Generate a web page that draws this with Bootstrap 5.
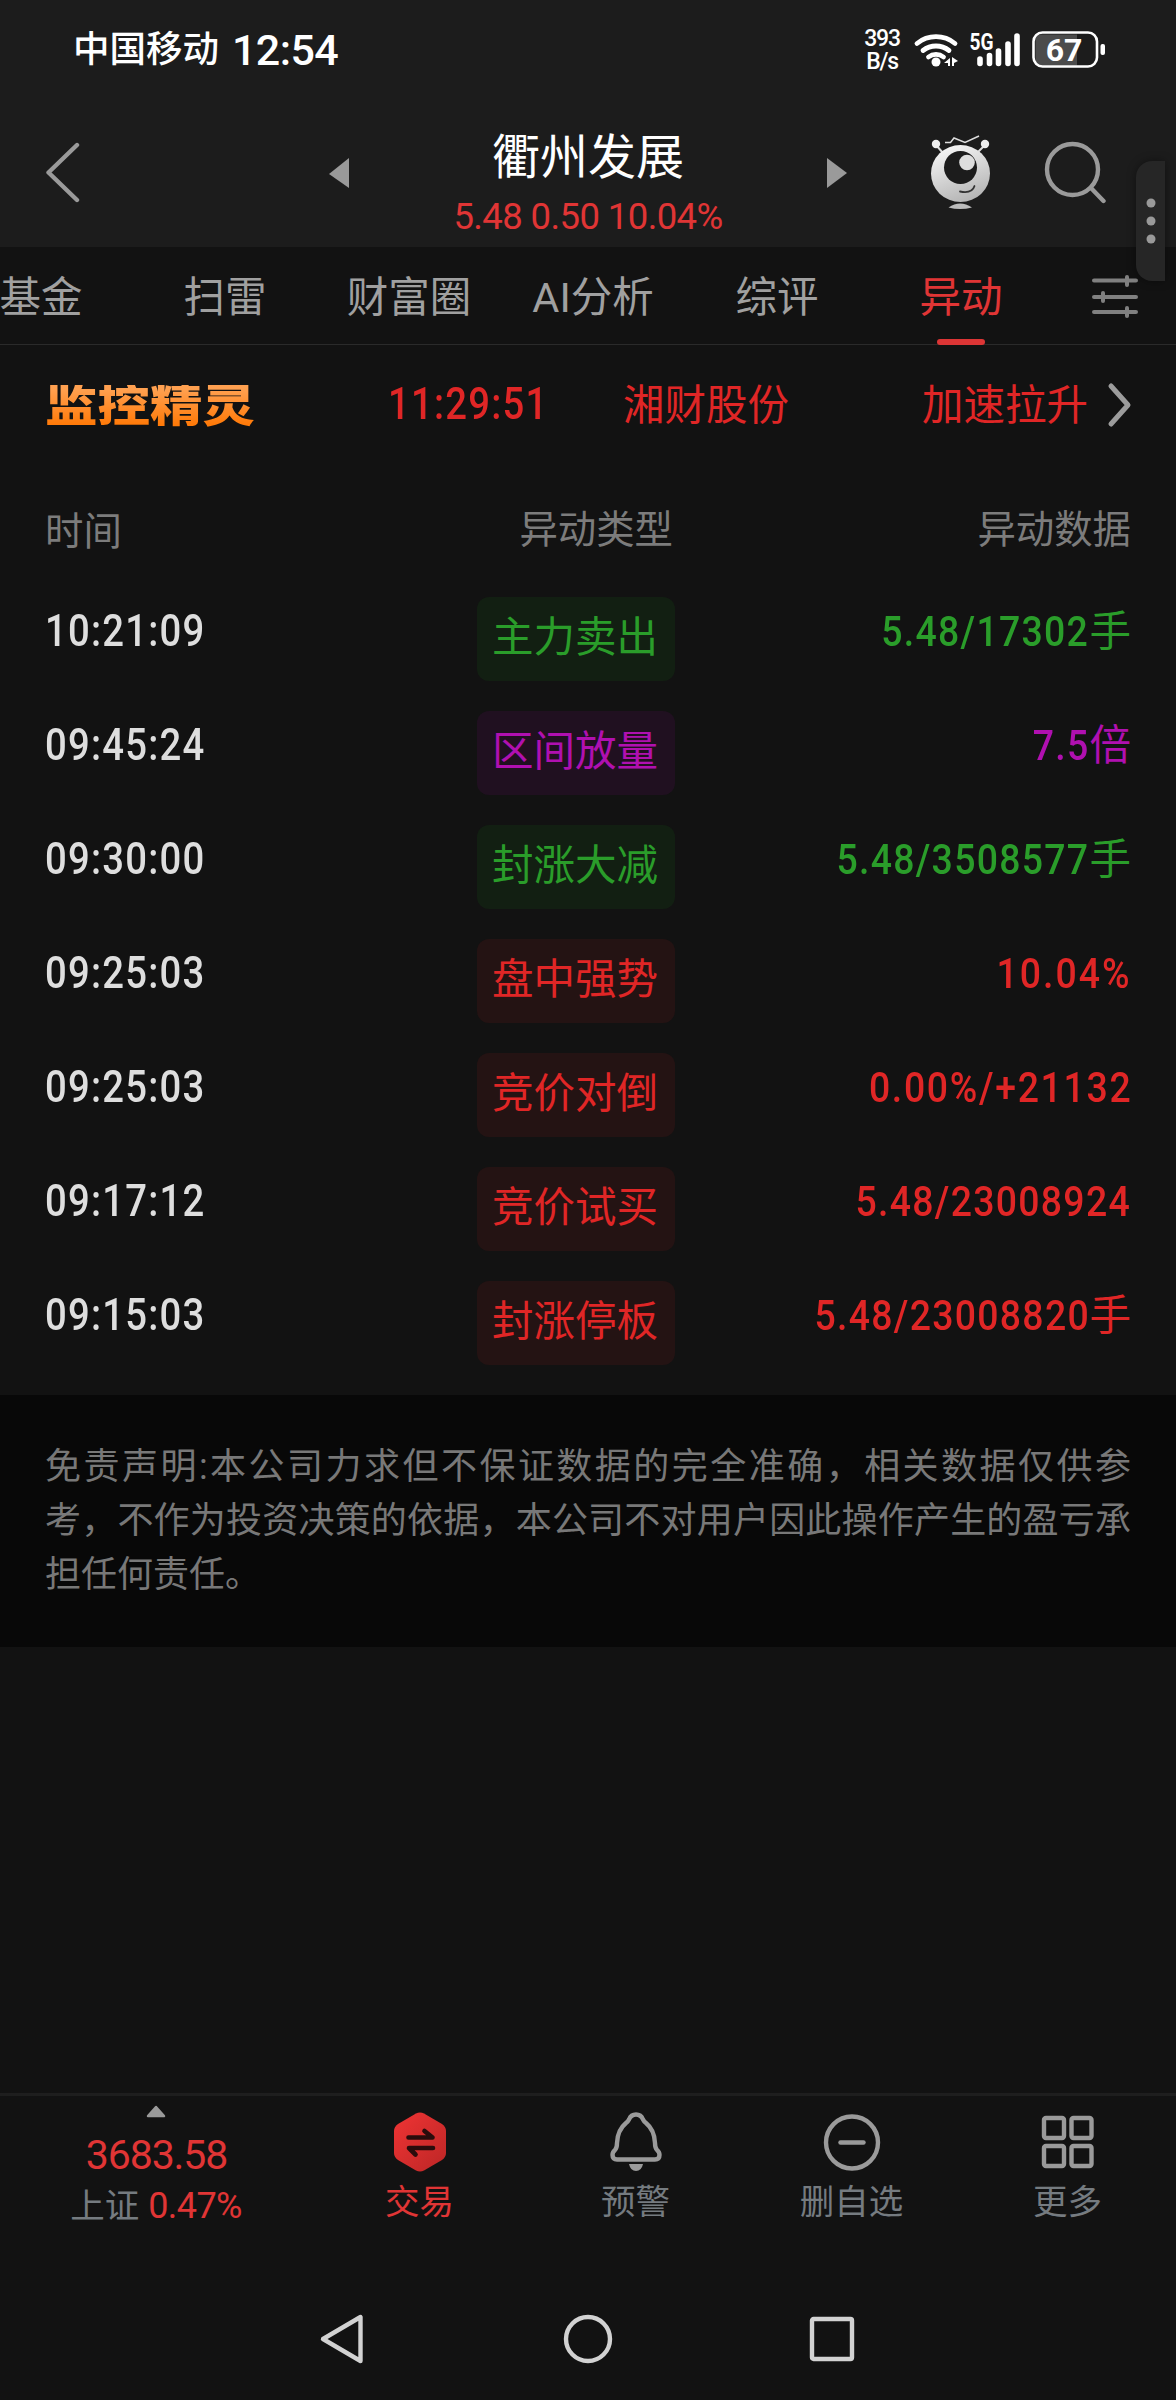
<!DOCTYPE html>
<html lang="zh-CN">
<head>
<meta charset="utf-8">
<meta name="viewport" content="width=device-width, initial-scale=1">
<title>衢州发展 异动</title>
<link href="https://cdn.jsdelivr.net/npm/bootstrap@5.3.0/dist/css/bootstrap.min.css" rel="stylesheet">
<style>
html,body{background:#121212}
body{font-family:Roboto,"Noto Sans CJK SC",sans-serif;color:#dedede;width:1176px;height:2400px;overflow:hidden;line-height:1}
svg{display:block;flex:none}
.c-red{color:#e02626}.c-soft{color:#e03535}.c-green{color:#2a9d2a}.c-purple{color:#b010b0}
.top-zone{background:#1c1c1c;height:247px}
.statusbar{height:100px;padding:0 69px 0 73px}
.carrier{font-size:36.5px;font-weight:500;line-height:48px;white-space:nowrap}
.clock{font-size:43px;font-weight:500;letter-spacing:-.6px;margin-left:13px;line-height:48px}
.rate{font-size:23px;font-weight:500;letter-spacing:-1.2px;line-height:23px;width:38px}
.rate div{height:23px}
.titlebar{height:147px;padding:0 68px 0 46px}
.title-mid{width:476px;margin-top:30px}
.stock{font-size:48px;line-height:56px}
.quote{font-size:36.5px;line-height:40px;letter-spacing:-.6px;margin-top:11px}
.tabs-strip{height:98px;border-bottom:1px solid #2a2a2a;color:#a0a0a0;font-size:41.5px}
.tabs-strip .tab-cell{flex:0 0 184px;height:97px;line-height:101px;text-align:center;white-space:nowrap}
.tabs-strip .tab-cell:first-child{margin-left:-51px}
.tab-cell.on::after{content:"";position:absolute;left:68px;bottom:-1px;width:48px;height:6px;border-radius:3px;background:#dc3535}
.monitor{height:120px;padding:0 42px 0 45px;font-size:41.5px;line-height:63px}
.brandword{font-size:52.5px;font-weight:900;line-height:52px;margin-top:3px;transform:scaleY(.86);background:linear-gradient(#ffa050 10%,#ff7a08 90%);-webkit-background-clip:text;background-clip:text;color:transparent}
.din{font-size:43.5px;letter-spacing:1.4px;font-weight:500;line-height:70px;transform:scaleX(.88);transform-origin:0 50%;white-space:nowrap}
.heads{height:126px;padding:0 45px;font-size:38.4px;color:#7c7c7c}
.line-item{height:114px;padding:0 45px}
.col-a{flex:0 0 361px}.col-b{flex:0 0 269px}.col-c{flex:1 1 0}
.pill{width:198px;height:84px;border-radius:12px;font-size:41.5px;line-height:81px;text-align:center;text-indent:-2px;white-space:nowrap}
.pill.c-red{background:#241313}.pill.c-green{background:#121f12}.pill.c-purple{background:#201020}
.val{line-height:70px}
.val .num{font-size:42.5px;letter-spacing:1.45px;font-weight:500;transform:scaleX(.88);transform-origin:100% 50%;white-space:nowrap}
.val .pct{letter-spacing:2.3px;margin-right:-1px}
.val .cj{font-size:41.5px}
.notice{background:#080808;height:252px;padding:45px 45px 0;font-size:36px;line-height:54px;text-align:justify;color:#787878}
.dock{border-top:3px solid #1e1e1e;height:187px;color:#757b80;font-size:34.5px}
.dock .idx{flex:0 0 312px}
.idx-val{font-size:41px;letter-spacing:-1.1px;line-height:48px;margin:13px 0 0 1px}
.idx-sub{line-height:40px;gap:9px;margin-top:7px}
.idx-sub span{font-size:36px;letter-spacing:-.6px}
.dock .act{flex:0 0 216px;padding-top:12px}
.dock .act span{line-height:40px;margin:8px 1px 0 0}
.sysnav{height:118px;margin-bottom:2px;gap:193px}
.handle{position:absolute;left:1136px;top:161px;width:29px;height:120px;border-radius:16px 0 0 16px;background:#262626;box-shadow:0 0 10px #0006}
</style>
<script src="https://cdn.jsdelivr.net/npm/bootstrap@5.3.0/dist/js/bootstrap.bundle.min.js"></script>
</head>
<body class="position-relative d-flex flex-column">
<header class="top-zone text-white">
  <div class="statusbar d-flex align-items-center">
    <span class="carrier">中国移动</span><span class="clock">12:54</span>
    <div class="rate ms-auto text-center"><div>393</div><div>B/s</div></div>
    <svg class="ms-2" width="198" height="48" viewBox="909 26 198 48" fill="none" stroke="#fff" stroke-linecap="round">
      <path d="M917 43.500a30 30 0 0 1 38 0" stroke-width="4.800"/><path d="M923 50.500a21 21 0 0 1 26 0" stroke-width="4.800"/><path d="M928.500 57a12 12 0 0 1 15 0" stroke-width="4.800"/>
      <circle cx="936" cy="62" r="4.500" fill="#fff" stroke="none"/>
      <path d="M944 63l6-5v8h-2v-3zM958 61l-6-4v9h2v-3z" fill="#fff" stroke="none"/>
      <path d="M980 59v4.500M989.500 55.500v8M998.500 51v12.500M1008 44v19.500M1017 36v27.500" stroke-width="5.600"/>
      <text x="969.500" y="49.500" font-size="23" font-weight="700" fill="#fff" stroke="none" textLength="24" lengthAdjust="spacingAndGlyphs">5G</text>
      <path d="M1041 34.500h36v31h-36q-5.500 0-5.500-6v-19q0-6 5.500-6z" fill="#4c4c4c" stroke="none"/>
      <rect x="1033.500" y="32.500" width="63.500" height="34" rx="9" stroke-width="2.600"/>
      <rect x="1100.500" y="44" width="4.500" height="11" rx="2" fill="#fff" stroke="none"/>
      <text x="1064" y="61" font-size="32" font-weight="700" fill="#fff" stroke="none" text-anchor="middle">67</text>
    </svg>
  </div>
  <div class="titlebar d-flex align-items-start">
    <svg width="34" height="62" viewBox="46 142 34 62" style="margin-top:42px"><path d="M77 145L48.500 172.500l28.500 27.500" fill="none" stroke="#9a9a9a" stroke-width="4.400" stroke-linecap="round" stroke-linejoin="round"/></svg>
    <svg width="22" height="32" viewBox="0 0 22 32" style="margin:57px 0 0 248px"><path d="M21 1v30L1 17z" fill="#9a9a9a"/></svg>
    <div class="title-mid text-center"><div class="stock">衢州发展</div><div class="quote c-soft">5.48 0.50 10.04%</div></div>
    <svg width="22" height="32" viewBox="0 0 22 32" style="margin-top:57px"><path d="M1 1v30l20-15z" fill="#9a9a9a"/></svg>
    <svg width="64" height="78" viewBox="928 132 64 78" style="margin:32px 0 0 80px">
      <defs><linearGradient id="bot" x1=".2" y1="0" x2=".6" y2="1"><stop stop-color="#f8f8f8"/><stop offset="1" stop-color="#b4b4b4"/></linearGradient></defs>
      <path d="M936 145l7 8M985 145l-8 8" stroke="#ddd" stroke-width="2"/><circle cx="936" cy="144" r="4.200" fill="#eee"/><circle cx="985" cy="144" r="4.200" fill="#eee"/>
      <path d="M945 142.500h5.500l3.500-4.500 11 4.500 14-6.500" fill="none" stroke="#ddd" stroke-width="1.500"/>
      <ellipse cx="960.500" cy="173.500" rx="29.500" ry="28.500" fill="url(#bot)"/><circle cx="960.500" cy="167.500" r="16.500" fill="#1c1c1c"/><circle cx="967" cy="162.500" r="7.800" fill="#ddd"/>
      <path d="M960 191.500q12 2.500 14.500-5.500" fill="none" stroke="#333" stroke-width="1.800" stroke-linecap="round"/><path d="M948.500 207.500q11.500-8 23.500 0q-12 3-23.500 0z" fill="#bbb"/>
    </svg>
    <svg width="64" height="64" viewBox="1043 140 64 64" style="margin:40px 0 0 51px"><g fill="none" stroke="#9a9a9a" stroke-width="4.400" stroke-linecap="round"><circle cx="1072.500" cy="169.500" r="25.500"/><path d="M1091 188l12.500 13"/></g></svg>
  </div>
</header>
<nav class="tabs-strip d-flex">
  <div class="tab-cell">基金</div><div class="tab-cell">扫雷</div><div class="tab-cell">财富圈</div><div class="tab-cell">AI分析</div><div class="tab-cell">综评</div><div class="tab-cell on c-soft position-relative">异动</div>
  <svg width="48" height="44" viewBox="0 0 48 44" style="margin:27px 0 0 38px"><path d="M3 6.500h42M3 23h42M3 38h42M36 3v8M12 19v8M36 34v8" stroke="#808080" stroke-width="4" stroke-linecap="round"/></svg>
</nav>
<section class="monitor c-red d-flex align-items-center">
  <div class="brandword">监控精灵</div>
  <div class="din" style="margin-left:133px;width:237px">11:29:51</div>
  <div style="margin-left:-2px">湘财股份</div>
  <div class="ms-auto">加速拉升</div>
  <svg width="28" height="46" viewBox="0 0 28 46" style="margin-left:18px"><path d="M5 4l17 19L5 42" fill="none" stroke="#9c9c9c" stroke-width="5" stroke-linecap="round" stroke-linejoin="round"/></svg>
</section>
<section class="heads d-flex align-items-center">
  <div class="col-a pt-2">时间</div><div class="col-b text-end pt-1"><span class="me-1" style="margin-right:2px!important">异动类型</span></div><div class="col-c text-end pt-1">异动数据</div>
</section>
<main style="padding-top:6px;height:804px">
  <div class="line-item d-flex"><div class="col-a"><div class="din">10:21:09</div></div><div class="col-b d-flex justify-content-end"><div class="pill c-green">主力卖出</div></div><div class="val col-c d-flex justify-content-end c-green"><span class="num">5.48/17302</span><span class="cj">手</span></div></div>
  <div class="line-item d-flex"><div class="col-a"><div class="din">09:45:24</div></div><div class="col-b d-flex justify-content-end"><div class="pill c-purple">区间放量</div></div><div class="val col-c d-flex justify-content-end c-purple"><span class="num">7.5</span><span class="cj">倍</span></div></div>
  <div class="line-item d-flex"><div class="col-a"><div class="din">09:30:00</div></div><div class="col-b d-flex justify-content-end"><div class="pill c-green">封涨大减</div></div><div class="val col-c d-flex justify-content-end c-green"><span class="num">5.48/3508577</span><span class="cj">手</span></div></div>
  <div class="line-item d-flex"><div class="col-a"><div class="din">09:25:03</div></div><div class="col-b d-flex justify-content-end"><div class="pill c-red">盘中强势</div></div><div class="val col-c d-flex justify-content-end c-red"><span class="num pct">10.04%</span></div></div>
  <div class="line-item d-flex"><div class="col-a"><div class="din">09:25:03</div></div><div class="col-b d-flex justify-content-end"><div class="pill c-red">竞价对倒</div></div><div class="val col-c d-flex justify-content-end c-red"><span class="num pct" style="letter-spacing:1.9px">0.00%/+21132</span></div></div>
  <div class="line-item d-flex"><div class="col-a"><div class="din">09:17:12</div></div><div class="col-b d-flex justify-content-end"><div class="pill c-red">竞价试买</div></div><div class="val col-c d-flex justify-content-end c-red"><span class="num">5.48/23008924</span></div></div>
  <div class="line-item d-flex"><div class="col-a"><div class="din">09:15:03</div></div><div class="col-b d-flex justify-content-end"><div class="pill c-red">封涨停板</div></div><div class="val col-c d-flex justify-content-end c-red"><span class="num">5.48/23008820</span><span class="cj">手</span></div></div>
</main>
<div class="notice">免责声明:本公司力求但不保证数据的完全准确，相关数据仅供参考，不作为投资决策的依据，本公司不对用户因此操作产生的盈亏承担任何责任。</div>
<footer class="mt-auto">
  <div class="dock d-flex">
    <div class="idx d-flex flex-column align-items-center">
      <svg width="22" height="14" viewBox="0 0 22 14" style="margin-top:8px"><path d="M3 12L11 3l8 9z" fill="#9a9a9a" stroke="#9a9a9a" stroke-width="2.500" stroke-linejoin="round"/></svg>
      <div class="idx-val c-soft">3683.58</div>
      <div class="idx-sub d-flex">上证<span class="c-soft">0.47%</span></div>
    </div>
    <div class="act d-flex flex-column align-items-center c-soft">
      <svg width="56" height="66" viewBox="0 0 56 66"><defs><linearGradient id="hex" x1="0" y1="0" x2="1" y2="1"><stop stop-color="#f03434"/><stop offset="1" stop-color="#bc2626"/></linearGradient></defs><path d="M24 5.500q4-2 8 0l18 10.500q4 3 4 7v22q0 4-4 7L32 62.500q-4 2-8 0L6 52q-4-3-4-7V23q0-4 4-7z" fill="url(#hex)"/><path d="M16.500 29.500h24l-8-6.500M41 40H17l6.500 6.500" fill="none" stroke="#2a0c0c" stroke-width="4.600" stroke-linecap="round" stroke-linejoin="round"/></svg>
      <span>交易</span></div>
    <div class="act d-flex flex-column align-items-center">
      <svg width="56" height="66" viewBox="0 0 56 66" fill="none" stroke="#9a9a9a" stroke-width="4.400" stroke-linejoin="round"><path d="M28 6.500q5 0 7 5 1 2 3 3.500 8.500 7 9 20 0 5 2 7 2.500 2 2.500 5 0 4.500-4.500 4.500H9q-4.500 0-4.500-4.500 0-3 2.500-5 2-2 2-7 .5-13 9-20 2-1.500 3-3.500 2-5 7-5z"/><path d="M21 56h14q-1.500 7-7 7t-7-7z" fill="#9a9a9a" stroke="none"/></svg>
      <span>预警</span></div>
    <div class="act d-flex flex-column align-items-center">
      <svg width="60" height="66" viewBox="0 0 60 66" fill="none" stroke="#9a9a9a" stroke-width="4.400" stroke-linecap="round"><circle cx="30" cy="34.500" r="26"/><path d="M18.500 34.500h23"/></svg>
      <span>删自选</span></div>
    <div class="act d-flex flex-column align-items-center">
      <svg width="56" height="66" viewBox="0 0 56 66" fill="none" stroke="#9a9a9a" stroke-width="4.400"><rect x="4" y="10" width="20" height="20" rx="2"/><rect x="31.500" y="10" width="20" height="20" rx="2"/><rect x="4" y="38" width="20" height="20" rx="2"/><rect x="31.500" y="38" width="20" height="20" rx="2"/></svg>
      <span>更多</span></div>
  </div>
  <div class="sysnav d-flex justify-content-center align-items-center">
    <svg width="52" height="52" viewBox="0 0 52 52" fill="none" stroke="#d2d2d2" stroke-width="4.400" stroke-linejoin="round"><path d="M6 26L43.500 4v44z"/></svg>
    <svg width="52" height="52" viewBox="0 0 52 52" fill="none" stroke="#d2d2d2" stroke-width="4.400"><circle cx="26" cy="26" r="22"/></svg>
    <svg width="52" height="52" viewBox="0 0 52 52" fill="none" stroke="#d2d2d2" stroke-width="4.400"><rect x="5" y="6" width="40" height="40" rx="1.500"/></svg>
  </div>
</footer>
<div class="handle d-flex justify-content-center align-items-center"><svg width="12" height="50" viewBox="0 0 12 50" fill="#999"><circle cx="6" cy="7" r="4.500"/><circle cx="6" cy="25" r="4.500"/><circle cx="6" cy="43" r="4.500"/></svg></div>
</body>
</html>
